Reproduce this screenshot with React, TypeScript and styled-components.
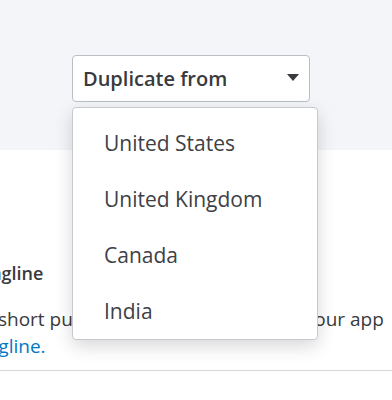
import styled, { createGlobalStyle } from "styled-components";

const GlobalStyle = createGlobalStyle`
  body {
    margin: 0;
    overflow: hidden;
    background: #ffffff;
    font-family: "Open Sans", Lato, sans-serif;
    color: #393a3d;
  }
`;

const countries = ["United States", "United Kingdom", "Canada", "India"];

const App = () => {
  return (
    <Page>
      <GlobalStyle />
      <Band>
        <SelectWrap>
          <SelectButton>
            <span>Duplicate from</span>
            <Caret />
          </SelectButton>
          <Menu>
            {countries.map((c) => (
              <MenuItem key={c}>{c}</MenuItem>
            ))}
          </Menu>
        </SelectWrap>
      </Band>
      <Section>
        <Title>Tagline</Title>
        <Desc>
          A short punchy phrase that explains your app
          <br />
          <Link>tagline.</Link>
        </Desc>
      </Section>
      <Divider />
    </Page>
  );
};

export default App;

const Page = styled.div`
  width: 392px;
  height: 400px;
  overflow: hidden;
`;

const Band = styled.div`
  height: 150px;
  box-sizing: border-box;
  padding: 55px 0 0 72px;
  background-color: #f4f5f8;
`;

const SelectWrap = styled.div`
  position: relative;
  width: 238px;
  z-index: 10;
`;

const SelectButton = styled.div`
  height: 47px;
  box-sizing: border-box;
  border: 1px solid #babec5;
  border-radius: 4px;
  background: #ffffff;
  display: flex;
  align-items: center;
  justify-content: space-between;
  padding: 0 10px 0 10px;
  font-size: 20px;
  font-weight: 600;
  color: #393a3d;
`;

const Caret = styled.span`
  width: 0;
  height: 0;
  border-left: 6px solid transparent;
  border-right: 6px solid transparent;
  border-top: 7px solid #393a3d;
  margin-top: -2px;
`;

const Menu = styled.div`
  position: absolute;
  top: 52px;
  left: 0;
  width: 246px;
  box-sizing: border-box;
  padding: 7px 0 0;
  background: #ffffff;
  border: 1px solid #c6c9cf;
  border-radius: 4px;
  box-shadow: 0 6px 18px rgba(0, 0, 0, 0.16);
`;

const MenuItem = styled.div`
  height: 56px;
  display: flex;
  align-items: center;
  padding-left: 31px;
  font-size: 21px;
  color: #404145;
`;

const Section = styled.div`
  margin-left: -19px;
  padding-top: 112px;
  white-space: nowrap;
`;

const Title = styled.div`
  font-size: 18px;
  font-weight: 600;
  line-height: 22px;
  color: #393a3d;
`;

const Desc = styled.div`
  margin-top: 22px;
  font-size: 19px;
  line-height: 27px;
  color: #393a3d;
`;

const Link = styled.span`
  color: #0077c5;
`;

const Divider = styled.div`
  margin-top: 10px;
  height: 1px;
  background: #d4d7dc;
`;
